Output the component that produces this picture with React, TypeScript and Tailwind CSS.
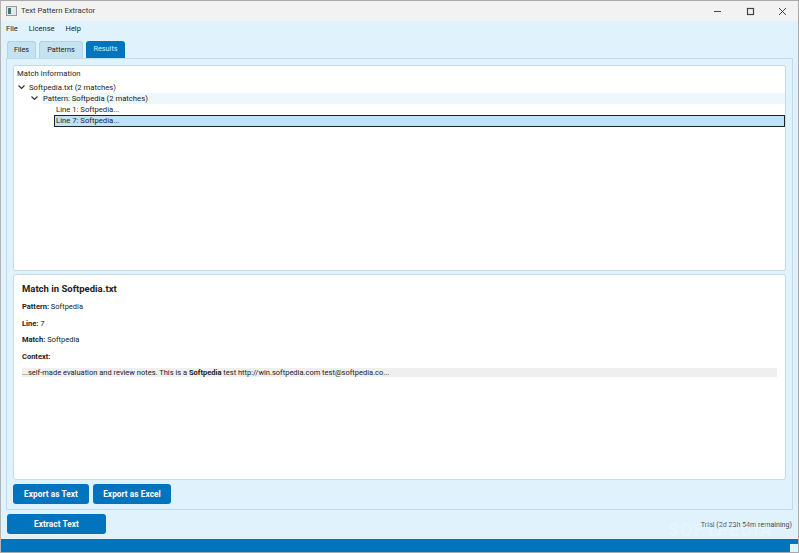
const font = { fontFamily: 'Roboto, "Liberation Sans", sans-serif' };

function Chevron() {
  return (
    <svg className="w-[9px] h-[9px] shrink-0" viewBox="0 0 9 9" fill="none" stroke="#333333" strokeWidth={1.2}>
      <path d="M1.5 2.5L4.5 5.5L7.5 2.5" />
    </svg>
  );
}

function ActionButton({ label, className }: { label: string; className: string }) {
  return (
    <button className={`h-[20px] rounded-[3px] bg-[#0274bd] text-white text-[8.2px] font-bold tracking-[0.1px] flex items-center justify-center ${className}`}>
      {label}
    </button>
  );
}

export default function App() {
  return (
    <div className="relative w-[799px] h-[553px] overflow-hidden flex flex-col bg-[#e0f2fb] text-[#222] border-l border-t border-r border-b border-[#a9a9a9] border-l-[#b5b5b5]" style={font}>
      {/* title bar */}
      <div className="h-[20px] shrink-0 flex items-center bg-[#f2f2f2]">
        <div className="ml-[5px] w-[11px] h-[10px] border border-[#999] bg-[#e4e9eb] flex items-start">
          <div className="ml-[1px] mt-[1px] w-[3px] h-[6px] bg-[#3d7a7c]" />
        </div>
        <span className="ml-[4px] text-[7.7px] text-[#333]">Text Pattern Extractor</span>
        <div className="ml-auto flex items-center">
          <svg className="w-[9px] h-[9px] mr-[24px]" viewBox="0 0 9 9" stroke="#444" fill="none"><path d="M1 4.5H8" /></svg>
          <svg className="w-[9px] h-[9px] mr-[23px]" viewBox="0 0 9 9" stroke="#444" fill="none"><rect x="1.5" y="1.5" width="6" height="6" strokeWidth="1.2" /></svg>
          <svg className="w-[9px] h-[9px] mr-[11px]" viewBox="0 0 9 9" stroke="#444" fill="none"><path d="M1 1L8 8M8 1L1 8" /></svg>
        </div>
      </div>

      {/* menu */}
      <div className="h-[16px] shrink-0 flex items-center gap-[11px] pl-[5px] text-[7.5px] text-[#222]">
        <span>File</span>
        <span>License</span>
        <span>Help</span>
      </div>

      {/* tabs */}
      <div className="h-[17px] mt-[4px] shrink-0 flex items-end gap-[3px] pl-[6px] text-[7.3px]">
        <div className="w-[29px] h-[17px] rounded-t-[3px] bg-[#c5e2f0] border border-[#b3d4e4] border-b-0 flex items-center justify-center">Files</div>
        <div className="w-[44px] h-[17px] rounded-t-[3px] bg-[#c5e2f0] border border-[#b3d4e4] border-b-0 flex items-center justify-center">Patterns</div>
        <div className="w-[39px] h-[17px] rounded-t-[3px] bg-[#0274bd] text-[#d8eefa] flex items-center justify-center">Results</div>
      </div>

      {/* tab pane */}
      <div className="mx-[5px] h-[452px] shrink-0 border border-[#bfdcec] flex flex-col px-[6px] pt-[6px]">
        <div className="h-[206px] shrink-0 bg-white border border-[#c3dcea] rounded-[2px] pt-[2px] text-[7.7px] text-[#222]">
          <div className="pl-[3px] h-[12px] flex items-center">Match Information</div>
          <div className="mt-[2px] h-[11px] flex items-center pl-[3px] gap-[3px]">
            <Chevron />
            <span>Softpedia.txt (2 matches)</span>
          </div>
          <div className="h-[11px] flex items-center pl-[16px] gap-[3px]">
            <Chevron />
            <span className="flex-1 bg-[#eef7fc] pl-[1px]">Pattern: Softpedia (2 matches)</span>
          </div>
          <div className="h-[11px] flex items-center pl-[42px]">Line 1: Softpedia...</div>
          <div className="ml-[40px] h-[12px] flex items-center pl-[1px] bg-[#bfe2fb] border border-[#222]">Line 7: Softpedia...</div>
        </div>

        <div className="mt-[3px] h-[206px] shrink-0 bg-white border border-[#c3dcea] rounded-[3px] px-[8px] pt-[8px] text-[7.5px] text-[#222]">
          <div className="text-[9.5px] font-bold leading-[12px]">Match in Softpedia.txt</div>
          <div className="mt-[6px] leading-[11px]"><b>Pattern:</b> Softpedia</div>
          <div className="mt-[6px] leading-[11px]"><b>Line:</b> 7</div>
          <div className="mt-[5px] leading-[11px]"><b>Match:</b> Softpedia</div>
          <div className="mt-[6px] leading-[11px]"><b>Context:</b></div>
          <div className="mt-[6px] h-[9px] leading-[9px] bg-[#efefef]">
            ...self-made evaluation and review notes. This is a <b>Softpedia</b> test http://win.softpedia.com test@softpedia.co...
          </div>
        </div>

        <div className="mt-[4px] flex gap-[4px]">
          <ActionButton label="Export as Text" className="w-[76px]" />
          <ActionButton label="Export as Excel" className="w-[78px]" />
        </div>
      </div>

      {/* bottom actions */}
      <div className="mt-[4px] h-[20px] shrink-0 flex items-center justify-between pl-[6px] pr-[6px]">
        <ActionButton label="Extract Text" className="w-[99px]" />
        <span className="text-[7.1px] text-[#3b4a55] mt-[2px]">Trial (2d 23h 54m remaining)</span>
      </div>

      <div className="mt-[5px] flex-1 flex justify-end items-end bg-[#0274bd]">
        <div className="w-[8px] h-[8px] bg-[#e0f2fb]" />
      </div>

      {/* watermark */}
      <div className="absolute left-[667px] top-[515px] text-[18px] font-bold tracking-[1px] text-white/25 pointer-events-none">SOFTPEDIA</div>
    </div>
  );
}
